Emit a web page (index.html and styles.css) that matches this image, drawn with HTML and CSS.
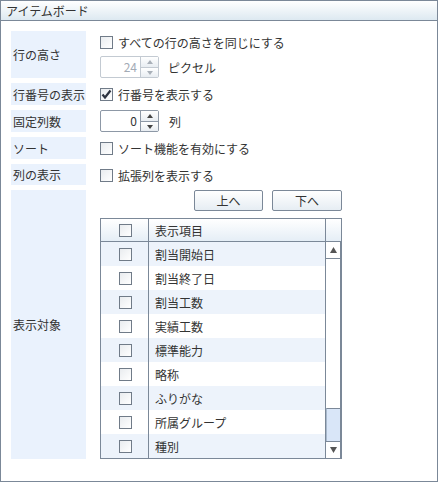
FILE: index.html
```html
<!DOCTYPE html>
<html lang="ja">
<head>
<meta charset="utf-8">
<link rel="stylesheet" href="styles.css">
</head>
<body>
<div class="panel">
  <div class="title">アイテムボード</div>
  <div class="form">
    <div class="label">行の高さ</div>
    <div class="field stack">
      <div class="line"><span class="cb"></span><span>すべての行の高さを同じにする</span></div>
      <div class="line">
        <div class="spin disabled"><span class="val">24</span><span class="btns"><span class="up"></span><span class="dn"></span></span></div>
        <span class="unit">ピクセル</span>
      </div>
    </div>

    <div class="label">行番号の表示</div>
    <div class="field line"><span class="cb checked"><svg width="13" height="13" viewBox="0 0 13 13"><path d="M2.5 6.5 L5 9.5 L10.5 2.5" fill="none" stroke="#2d3340" stroke-width="2.2"/></svg></span><span>行番号を表示する</span></div>

    <div class="label">固定列数</div>
    <div class="field line">
      <div class="spin"><span class="val">0</span><span class="btns"><span class="up"></span><span class="dn"></span></span></div>
      <span class="unit u2">列</span>
    </div>

    <div class="label">ソート</div>
    <div class="field line"><span class="cb"></span><span>ソート機能を有効にする</span></div>

    <div class="label">列の表示</div>
    <div class="field line"><span class="cb"></span><span>拡張列を表示する</span></div>

    <div class="label">表示対象</div>
    <div class="field target">
      <div class="btnrow">
        <button class="btn b1">上へ</button>
        <button class="btn b2">下へ</button>
      </div>
      <div class="grid">
        <div class="head">
          <div class="c1"><span class="cb"></span></div>
          <div class="c2">表示項目</div>
          <div class="c3"></div>
        </div>
        <div class="body">
          <div class="rows">
            <div class="row odd"><div class="c1"><span class="cb"></span></div><div class="c2">割当開始日</div></div>
            <div class="row"><div class="c1"><span class="cb"></span></div><div class="c2">割当終了日</div></div>
            <div class="row odd"><div class="c1"><span class="cb"></span></div><div class="c2">割当工数</div></div>
            <div class="row"><div class="c1"><span class="cb"></span></div><div class="c2">実績工数</div></div>
            <div class="row odd"><div class="c1"><span class="cb"></span></div><div class="c2">標準能力</div></div>
            <div class="row"><div class="c1"><span class="cb"></span></div><div class="c2">略称</div></div>
            <div class="row odd"><div class="c1"><span class="cb"></span></div><div class="c2">ふりがな</div></div>
            <div class="row"><div class="c1"><span class="cb"></span></div><div class="c2">所属グループ</div></div>
            <div class="row odd"><div class="c1"><span class="cb"></span></div><div class="c2">種別</div></div>
          </div>
          <div class="sb">
            <div class="arrow top"><svg width="7" height="6" viewBox="0 0 7 6"><path d="M3.5 0 L7 6 L0 6 Z" fill="#555"/></svg></div>
            <div class="track"></div>
            <div class="thumb"></div>
            <div class="arrow bot"><svg width="7" height="6" viewBox="0 0 7 6"><path d="M0 0 L7 0 L3.5 6 Z" fill="#555"/></svg></div>
          </div>
        </div>
      </div>
    </div>
  </div>
</div>
</body>
</html>
```
FILE: styles.css
```css
* { box-sizing: border-box; }
body {
  margin: 0;
  font-family: "Noto Sans CJK JP", "Liberation Sans", sans-serif;
  font-size: 12px;
  color: #333;
  background: #fff;
}
.panel {
  width: 438px;
  height: 482px;
  border: 1px solid #7b8898;
  border-top: none;
  display: flex;
  flex-direction: column;
}
.title {
  height: 21px;
  line-height: 20px;
  padding-left: 5px;
  border-top: 1px solid #7b8898;
  border-bottom: 1px solid #7b8898;
  background: linear-gradient(#ffffff, #dde9f1);
  color: #333;
}
.form {
  display: grid;
  grid-template-columns: 75px 242px;
  grid-template-rows: 47px 22px 22px 22px 21px 269px;
  column-gap: 14px;
  row-gap: 5px;
  padding: 10px 0 0 10px;
}
.label {
  background: #eaf2fd;
  display: flex;
  align-items: center;
  padding-left: 2px;
  color: #333;
}
.field { display: flex; }
.stack { flex-direction: column; gap: 3px; }
.line { display: flex; align-items: center; height: 22px; }
.cb {
  width: 13px;
  height: 13px;
  border: 1px solid #707b88;
  background: linear-gradient(135deg, #e9ecef, #ffffff);
  margin-right: 5px;
  display: inline-block;
  flex: none;
  position: relative;
}
.cb svg { position: absolute; left: -1px; top: -1px; }
.spin {
  width: 59px;
  height: 22px;
  border: 1px solid #8d98a6;
  border-radius: 2px;
  display: flex;
  background: #fff;
}
.spin .val {
  flex: 1;
  text-align: right;
  padding-right: 3px;
  line-height: 20px;
  color: #333;
}
.spin .btns {
  width: 18px;
  border-left: 1px solid #8d98a6;
  display: flex;
  flex-direction: column;
}
.spin .up, .spin .dn {
  flex: 1;
  background: linear-gradient(#ffffff, #e8edf2);
  position: relative;
}
.spin .up { border-bottom: 1px solid #8d98a6; }
.spin .up::after, .spin .dn::after {
  content: "";
  position: absolute;
  left: 6px;
  top: 3px;
  border-left: 3px solid transparent;
  border-right: 3px solid transparent;
}
.spin .up::after { border-bottom: 4px solid #444; }
.spin .dn::after { border-top: 4px solid #444; top: 3px; }
.spin.disabled { border-color: #c3cad2; }
.spin.disabled .btns, .spin.disabled .up { border-color: #c3cad2; }
.spin.disabled .val { color: #a3abb6; }
.spin.disabled .up::after { border-bottom-color: #a9b0b9; }
.spin.disabled .dn::after { border-top-color: #a9b0b9; }
.unit { margin-left: 9px; }
.unit.u2 { margin-left: 10px; }

.target { flex-direction: column; }
.btnrow {
  display: flex;
  justify-content: flex-end;
  gap: 9px;
  height: 21px;
  margin-bottom: 7px;
}
.btn {
  font-family: inherit;
  font-size: 12px;
  color: #333;
  border: 1px solid #7b8898;
  border-radius: 2px;
  background: linear-gradient(#ffffff, #e6edf3);
  padding: 0;
  height: 21px;
}
.b1 { width: 69px; }
.b2 { width: 70px; }
.grid {
  width: 242px;
  height: 241px;
  border: 1px solid #7b8898;
  display: flex;
  flex-direction: column;
}
.head {
  height: 24px;
  display: flex;
  border-bottom: 1px solid #7b8898;
  background: linear-gradient(#ffffff, #e5eef6);
}
.c1 {
  width: 48px;
  border-right: 1px solid #7b8898;
  display: flex;
  align-items: center;
  justify-content: center;
  flex: none;
}
.c1 .cb { margin: 0 0 0 1px; }
.c2 {
  flex: 1;
  display: flex;
  align-items: center;
  padding-left: 6px;
}
.head .c3 { width: 16px; border-left: 1px solid #7b8898; }
.body { flex: 1; display: flex; }
.rows { flex: 1; }
.row { height: 24px; display: flex; }
.row.odd { background: #edf3fb; }
.sb {
  width: 16px;
  border-left: 1px solid #7b8898;
  border-right: 1px solid #7b8898;
  display: flex;
  flex-direction: column;
  background: #fff;
}
.arrow {
  height: 17px;
  display: flex;
  align-items: center;
  justify-content: center;
  background: #fff;
}
.arrow.top { border-bottom: 1px solid #7b8898; }
.arrow.bot { border-top: 1px solid #7b8898; height: 17px; }
.track { flex: 1; }
.thumb {
  height: 33px;
  background: #d9e6f8;
  border-top: 1px solid #7b8898;
  border-left: 1px solid #a9b9cc;
}
```
